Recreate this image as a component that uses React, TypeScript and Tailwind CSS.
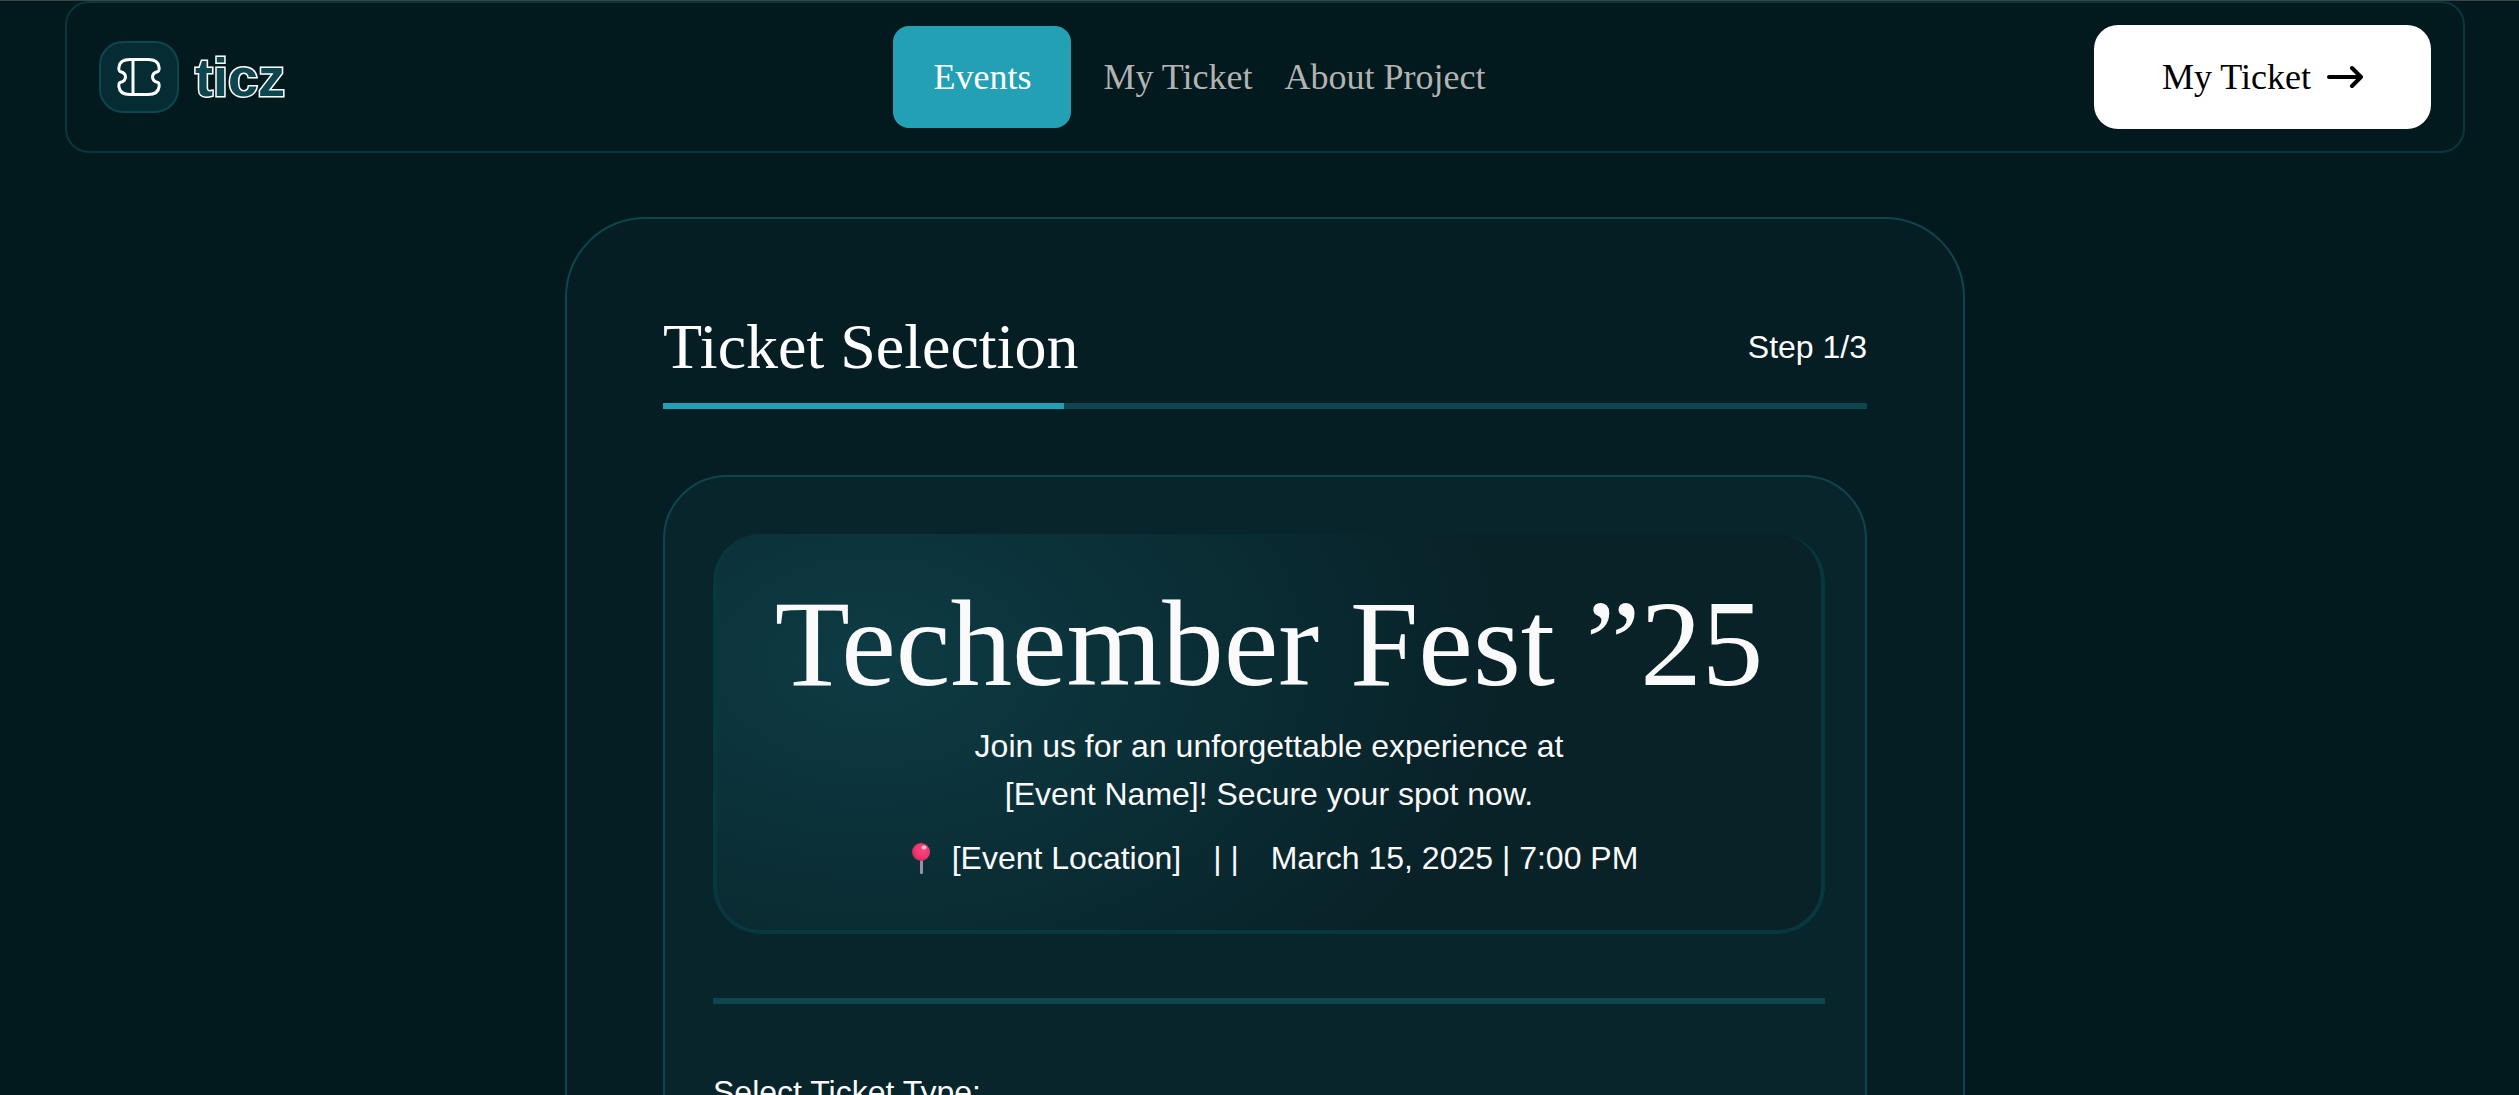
const navLinks = [
  { label: "My Ticket", href: "#my-ticket" },
  { label: "About Project", href: "#about" },
];

const serif = "font-['Liberation_Serif',serif]";

function TicketMark() {
  return (
    <svg width="44" height="38" viewBox="0 0 44 38" fill="none" stroke="#fff" strokeWidth="3" strokeLinejoin="round" aria-hidden="true">
      <path d="M13 1.5H31C38 1.5 41.5 4 42 9C42.3 11 42.3 13 41 13.5C37 14.5 35.5 16.5 35.500 19S37 23.500 41 24.500C42.300 25 42.300 27 42 29C41.500 34 38 36.500 31 36.500H13C6 36.500 2.500 34 2 29C1.700 27 1.700 25 3 24.500C7 23.500 8.500 21.500 8.500 19S7 14.500 3 13.500C1.700 13 1.700 11 2 9C2.500 4 6 1.500 13 1.500Z" />
      <path d="M16 2V36" />
    </svg>
  );
}

function Logo() {
  return (
    <a href="#home" className="flex items-center gap-4">
      <span className="flex h-[72px] w-20 items-center justify-center rounded-3xl border-2 border-[#0e464f] bg-[#052c32]">
        <TicketMark />
      </span>
      <span className="w-[90px] text-[54px] leading-[72px] font-bold whitespace-nowrap text-[#0e464f] [-webkit-text-stroke:3px_#fff] [paint-order:stroke_fill]">
        ticz
      </span>
    </a>
  );
}

function ArrowIcon() {
  return (
    <svg width="36" height="24" viewBox="0 0 36 24" fill="none" stroke="currentColor" strokeWidth="4" strokeLinecap="round" strokeLinejoin="round" aria-hidden="true">
      <path d="M2 12H33M25 3L34 12L25 21" />
    </svg>
  );
}

function PinIcon() {
  return (
    <svg width="44" height="34" viewBox="0 0 44 34" role="img" aria-label="Location">
      <defs>
        <radialGradient id="pin" cx="0.6" cy="0.4" r="0.65">
          <stop offset="0" stopColor="#ff4580" />
          <stop offset="0.65" stopColor="#f0346c" />
          <stop offset="1" stopColor="#b5305a" />
        </radialGradient>
      </defs>
      <rect x="20" y="18" width="3" height="15" rx="1" fill="#9b8fa6" />
      <circle cx="21" cy="11" r="9" fill="url(#pin)" />
      <ellipse cx="24" cy="6.500" rx="2.500" ry="2" fill="#ffc0d4" />
    </svg>
  );
}

function Header() {
  return (
    <header className="flex items-center justify-between rounded-3xl border-2 border-[#07373f] px-8 py-[22px]">
      <Logo />
      <nav className={`flex items-center gap-8 text-4xl ${serif}`}>
        <a href="#events" className="rounded-2xl bg-[#24a0b5] px-10 py-6 leading-[54px] text-white">
          Events
        </a>
        {navLinks.map((link) => (
          <a key={link.label} href={link.href} className="leading-[54px] text-[#b3b3b3]">
            {link.label}
          </a>
        ))}
      </nav>
      <button type="button" className={`flex items-center gap-4 rounded-3xl bg-white px-[68px] py-[25px] text-4xl leading-[54px] text-black ${serif}`}>
        My Ticket
        <ArrowIcon />
      </button>
    </header>
  );
}

function EventCard() {
  return (
    <section className="flex flex-col items-center gap-4 rounded-[48px] border-4 border-t-0 border-[#07373f] bg-[#0a0c11]/10 bg-[radial-gradient(57.42%_106.59%_at_14.02%_32.06%,rgba(36,160,181,0.2)_0%,rgba(36,160,181,0)_100%)] py-12 text-center">
      <h2 className={`text-[123px] leading-[124px] whitespace-nowrap ${serif}`}>Techember Fest ”25</h2>
      <p className="max-w-[680px]">Join us for an unforgettable experience at [Event Name]! Secure your spot now.</p>
      <div className="flex items-center gap-8">
        <span className="flex items-center gap-2">
          <PinIcon />
          [Event Location]
        </span>
        <span>| |</span>
        <time dateTime="2025-03-15T19:00">March 15, 2025 | 7:00 PM</time>
      </div>
    </section>
  );
}

function TicketSelection() {
  return (
    <main className="mx-auto mt-16 w-full max-w-[1400px] rounded-[80px] border-2 border-[#0e464f] bg-[#041e23] p-24">
      <div className="flex items-center justify-between">
        <h1 className={`text-[64px] leading-none text-white ${serif}`}>Ticket Selection</h1>
        <p className="text-white">Step 1/3</p>
      </div>
      <div className="mt-6 h-1.5 bg-[#0e464f]" role="progressbar" aria-label="Step" aria-valuemin={0} aria-valuemax={3} aria-valuenow={1}>
        <div className="h-full w-1/3 bg-[#24a0b5]" />
      </div>
      <div className="mt-[66px] rounded-[64px] border-2 border-[#0e464f] bg-[#08252b] pt-[57px] pr-10 pb-12 pl-12">
        <EventCard />
        <hr className="my-16 h-1.5 border-0 bg-[#0e464f]" />
        <p>Select Ticket Type:</p>
      </div>
    </main>
  );
}

export default function App() {
  return (
    <div className="h-screen overflow-hidden border-t border-[#3c4343] bg-[#02191d] pr-[54px] pl-[65px] font-['Liberation_Sans',sans-serif] text-[32px] leading-[48px] text-[#fafafa]">
      <Header />
      <TicketSelection />
    </div>
  );
}
